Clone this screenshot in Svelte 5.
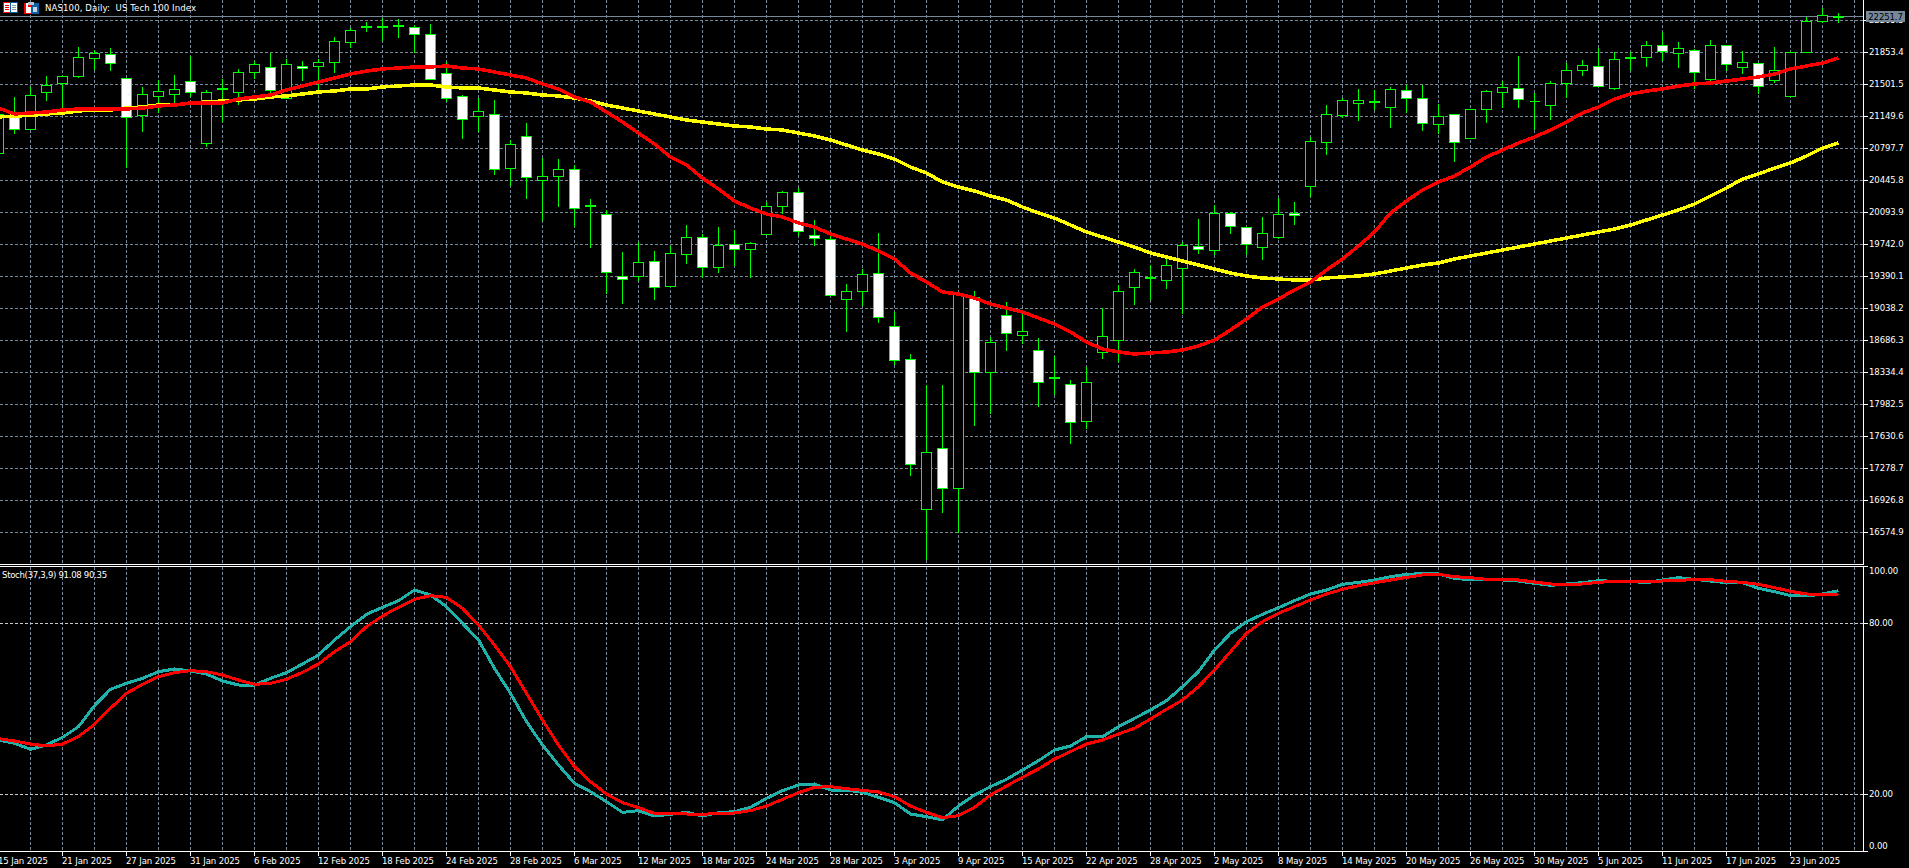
<script>
  // [high, bodyTop, bodyBottom, low, filled] in chart pixels, one per bar (16 px apart)
  const c = [
    [108,114,153,153,0],[97,117,129,133,1],[87,95,129,129,0],[76,85,92,100,0],[76,76,83,109,0],
    [47,57,76,77,0],[50,53,58,69,0],[48,54,63,70,1],[78,78,117,167,1],[87,94,115,131,0],
    [80,91,96,112,0],[75,89,94,106,0],[56,81,92,96,1],[90,92,143,146,0],[79,88,89,121,0],
    [69,72,92,104,0],[61,64,72,78,0],[53,67,90,92,1],[59,64,98,98,0],[61,66,68,80,1],
    [59,62,66,92,0],[37,41,62,72,0],[28,30,42,47,0],[22,26,27,31,0],[18,26,27,40,0],
    [19,25,26,37,0],[25,27,34,52,1],[24,34,79,79,1],[62,73,98,101,1],[95,96,119,138,1],
    [98,111,116,131,0],[100,114,169,174,1],[140,144,168,185,0],[123,136,177,198,1],[158,176,180,220,0],
    [159,169,176,206,0],[165,169,208,226,1],[199,205,206,247,0],[210,214,272,293,1],[252,276,279,303,1],
    [242,262,276,280,0],[251,261,287,299,1],[246,253,286,286,0],[225,237,254,263,0],[234,237,267,277,1],
    [227,245,267,272,0],[230,244,249,265,1],[242,243,249,277,0],[202,206,234,234,0],[191,192,206,213,0],
    [188,192,231,235,1],[220,235,238,245,1],[235,239,295,295,1],[284,291,299,331,0],[269,274,291,305,0],
    [233,273,317,322,1],[312,326,360,364,1],[354,359,464,475,1],[385,452,509,559,0],[385,448,488,512,1],
    [293,293,488,532,0],[291,297,372,425,1],[337,342,372,413,0],[302,315,333,350,1],[310,331,335,343,0],
    [338,350,382,406,1],[356,377,378,394,0],[380,384,422,443,1],[367,382,421,428,0],[308,336,352,358,0],
    [285,291,340,361,0],[269,272,287,304,0],[265,277,278,299,0],[259,265,280,288,0],[242,245,268,313,0],
    [219,246,249,253,1],[205,213,250,254,0],[212,213,226,233,1],[227,227,244,254,1],[217,233,247,259,0],
    [198,214,237,238,0],[202,213,215,224,1],[137,141,186,196,0],[105,114,142,154,0],[98,100,115,117,0],
    [89,100,103,120,0],[90,101,102,109,0],[87,89,107,127,0],[85,90,98,112,1],[85,98,123,130,1],
    [104,116,124,133,0],[114,114,142,161,1],[109,109,138,138,0],[90,91,109,122,0],[81,87,92,107,0],
    [56,88,99,107,1],[93,101,101,129,0],[81,83,105,119,0],[63,70,83,97,0],[60,65,70,75,0],
    [48,66,86,86,1],[52,59,88,89,0],[52,57,58,70,0],[41,45,57,66,0],[32,45,51,60,1],
    [42,48,53,67,0],[49,50,72,88,1],[40,45,79,82,0],[45,45,64,70,1],[51,62,67,73,0],
    [63,63,86,93,1],[47,70,80,82,0],[52,52,96,96,0],[17,21,52,52,0],[8,15,21,22,0],
    [13,16,17,22,0]
  ];
  const barX = (i) => -2 + 16 * i;
  const candles = c.map(([high, top, bot, low, filled], i) => {
    const x = barX(i);
    return {
      wick: `M${x + 0.5} ${high}V${low + 1}`,
      body: `M${x - 4.5} ${top + 0.5}h10V${bot + 0.5}h-10z`,
      filled
    };
  });

  const ma21 = [
    108,114,113,112,110,109,109,109,109,108,
    106,105,103,103,103,99,97,95,90,86,
    82,78,74,71,69,68,67,67,66,68,
    69,72,75,78,84,89,97,102,112,122,
    133,144,157,165,178,189,201,208,214,217,
    223,227,234,239,244,251,259,273,282,292,
    294,298,304,308,312,318,324,332,342,349,
    352,354,353,352,350,346,340,330,319,307,
    299,290,282,270,259,246,232,213,201,190,
    182,176,167,157,150,143,137,130,122,113,
    107,99,94,91,89,86,84,83,81,79,
    77,74,69,66,63,58
  ];
  const ma50 = [
    117,116,115.5,114,113,111,110,110,108,107,
    105,105,103,102,101,100,99,97,96,94,
    92,91,89,89,87,86,85,85,87,88,
    88,90,92,93,95,96,98,101,105,108,
    111,114,117,120,122,124,126,127,129,130,
    133,136,140,145,150,154,159,167,173,182,
    187,191,196,200,207,213,218,225,232,237,
    242,247,253,257,261,265,269,273,276,278,
    279,280,280,278,277,276,274,271,268,265,
    263,259,256,253,250,247,244,241,238,235,
    232,229,225,220,215,210,204,196,188,179,
    174,168,163,156,148,143
  ];

  // Stochastic, as read from the pane: left part, middle part, right part, tail
  const a = (v) => 540 + v / 3;
  const b = (v) => 570 + v / 3;
  const d = (v) => 520 + v / 3;
  const stochMain = [
    ...[600,610,628,615,592,560,497,448,430,415,395,387,393,402,423,435,435,415,398,372,345].map(a),
    ...[210,170,133,112,92,60,75,110,160,210,295,370,455,525,585,640,665,695,727,722,738,733,727,738,728,725,712,685,662,645,642,660,660,667,682,698,732,740,750,708].map(b),
    ...[675,650,628,600,572,540,528,500,500,470,445,420,392,350,305,240,190,155,133,113,92,72,60,43,37,30,20,13,11,12,25,29,28,30,33,40,46,42,38,32].map(b),
    ...[184,184,188,180,173,178,183,188,188,205,215,227,228,222,212].map(d)
  ];
  const stochSignal = [
    ...[596,603,612,618,612,590,553,505,460,433,410,398,392,395,405,420,433,430,418,397,372].map(a),
    ...[245,215,170,138,112,88,77,82,115,165,225,290,370,450,525,590,635,672,698,713,730,730,732,733,730,729,722,708,688,668,652,650,656,661,666,680,708,727,743,737].map(b),
    ...[712,675,648,622,597,567,545,522,510,492,475,447,418,390,350,300,245,190,155,130,110,90,72,58,47,38,30,22,15,13,20,23,28,29,30,36,42,43,42,37].map(b),
    ...[184,184,184,183,181,179,179,184,187,193,203,214,222,225,222].map(d)
  ];
  const points = (ys) => ys.map((y, i) => `${barX(i) + 0.5},${y}`).join(' ');

  const vGrid = Array.from({ length: 58 }, (_, i) => 30.5 + 32 * i);
  const hGrid = Array.from({ length: 17 }, (_, i) => 20.5 + 32 * i);

  const prices = ['22205.3','21853.4','21501.5','21149.6','20797.7','20445.8','20093.9','19742.0','19390.1','19038.2','18686.3','18334.4','17982.5','17630.6','17278.7','16926.8','16574.9'];
  const dates = ['15 Jan 2025','21 Jan 2025','27 Jan 2025','31 Jan 2025','6 Feb 2025','12 Feb 2025','18 Feb 2025','24 Feb 2025','28 Feb 2025','6 Mar 2025','12 Mar 2025','18 Mar 2025','24 Mar 2025','28 Mar 2025','3 Apr 2025','9 Apr 2025','15 Apr 2025','22 Apr 2025','28 Apr 2025','2 May 2025','8 May 2025','14 May 2025','20 May 2025','26 May 2025','30 May 2025','5 Jun 2025','11 Jun 2025','17 Jun 2025','23 Jun 2025'];
</script>

<div class="terminal">
  <section class="pane main">
    <svg class="plot" width="1863" height="564" viewBox="0 0 1863 564">
      {#each vGrid as x}<line class="grid" x1={x} x2={x} y1="0" y2="564" />{/each}
      {#each hGrid as y}<line class="grid" x1="0" x2="1863" y1={y} y2={y} />{/each}
      <line class="bid" x1="0" x2="1863" y1="16.5" y2="16.5" />
      {#each candles as k}
        <path class="wick" d={k.wick} />
        <path class="body" class:filled={k.filled} d={k.body} />
      {/each}
      <polyline class="line ma50" points={points(ma50)} />
      <polyline class="line ma21" points={points(ma21)} />
    </svg>
    <header class="title">
      <svg class="icon" width="16" height="12" viewBox="0 0 16 12">
        <rect x="0" y="0" width="15" height="11" fill="#fff" />
        <rect x="0.5" y="0.5" width="7" height="10" fill="#fff" stroke="#f00" />
        <rect x="7.5" y="0.5" width="7" height="10" fill="#fff" stroke="#0a5ea8" />
        <path d="M2 3.5h4M2 5.5h4M2 7.5h4" stroke="#f00" />
        <path d="M9 3.5h4M9 5.5h4M9 7.5h4" stroke="#8a9aa8" />
      </svg>
      <svg class="icon" width="16" height="12" viewBox="0 0 16 12">
        <rect x="0" y="1" width="8" height="11" fill="#f00" />
        <rect x="8" y="1" width="7" height="11" fill="#0a5ea8" />
        <rect x="2" y="1" width="2" height="6" fill="#fff" />
        <rect x="2" y="5" width="5" height="6" fill="#fff" />
        <rect x="4" y="0" width="6" height="3" fill="#b8c4ce" />
        <rect x="9" y="5" width="4" height="5" fill="#c8d4de" />
      </svg>
      <span class="title-text">NAS100, Daily:&nbsp; US Tech 100 Index</span>
    </header>
  </section>

  <aside class="scale">
    {#each prices as p}
      <div class="scale-row"><i class="tick"></i><span>{p}</span></div>
    {/each}
    <div class="bid-tag">22251.7</div>
  </aside>

  <section class="pane stoch">
    <svg class="plot" width="1863" height="284" viewBox="0 567 1863 284">
      {#each vGrid as x}<line class="grid" x1={x} x2={x} y1="567" y2="851" />{/each}
      <line class="level" x1="0" x2="1863" y1="623.5" y2="623.5" />
      <line class="level" x1="0" x2="1863" y1="794.5" y2="794.5" />
      <polyline class="line main-line" points={points(stochMain)} />
      <polyline class="line signal-line" points={points(stochSignal)} />
    </svg>
    <div class="stoch-label">Stoch(37,3,9) 91.08 90.35</div>
  </section>

  <aside class="scale stoch-scale">
    <div class="level-row top"><i class="tick"></i><span>100.00</span></div>
    <div class="level-row upper"><i class="tick"></i><span>80.00</span></div>
    <div class="level-row lower"><i class="tick"></i><span>20.00</span></div>
    <div class="level-row zero"><i class="tick"></i><span>0.00</span></div>
  </aside>

  <footer class="dates">
    {#each dates as t}
      <div class="date"><span>{t}</span></div>
    {/each}
  </footer>
</div>

<style>
  :global(body) {
    margin: 0;
    background: #000;
  }
  .terminal {
    width: 1909px;
    height: 868px;
    overflow: hidden;
    background: #000;
    color: #fff;
    font-family: "DejaVu Sans Condensed", "DejaVu Sans", sans-serif;
    font-stretch: condensed;
    font-size: 9.5px;
    letter-spacing: -0.12px;
    line-height: 12px;
    display: grid;
    grid-template-columns: 1863px 46px;
    grid-template-rows: 565px 287px 16px;
  }
  .pane {
    position: relative;
    min-width: 0;
  }
  .main {
    border-bottom: 1px solid #fff;
  }
  .stoch {
    margin-top: 1px;
    border-top: 1px solid #fff;
    border-bottom: 1px solid #fff;
  }
  .plot {
    display: block;
  }
  .grid {
    stroke: #778899;
    stroke-width: 1;
    stroke-dasharray: 3 2;
    shape-rendering: crispEdges;
  }
  .level {
    stroke: #c8ccd0;
    stroke-width: 1;
    stroke-dasharray: 3 2;
    shape-rendering: crispEdges;
  }
  .bid {
    stroke: #778899;
    stroke-width: 1;
    shape-rendering: crispEdges;
  }
  .wick {
    stroke: #00ff00;
    stroke-width: 1;
    fill: none;
    shape-rendering: crispEdges;
  }
  .body {
    stroke: #00ff00;
    stroke-width: 1;
    fill: #000;
    shape-rendering: crispEdges;
  }
  .body.filled {
    fill: #fff;
  }
  .line {
    fill: none;
    stroke-linejoin: round;
    shape-rendering: crispEdges;
  }
  .ma21 {
    stroke: #ff0000;
    stroke-width: 3.5;
  }
  .ma50 {
    stroke: #ffff00;
    stroke-width: 3.5;
  }
  .main-line {
    stroke: #20b2aa;
    stroke-width: 3;
  }
  .signal-line {
    stroke: #ff0000;
    stroke-width: 3;
  }
  .title {
    position: absolute;
    left: 3px;
    top: 2px;
    display: flex;
    align-items: center;
    gap: 5px;
    height: 12px;
  }
  .title-text {
    white-space: nowrap;
    letter-spacing: 0.12px;
  }
  .stoch-label {
    position: absolute;
    left: 2px;
    top: 2px;
    white-space: nowrap;
    letter-spacing: -0.3px;
  }
  .scale {
    position: relative;
    border-left: 1px solid #fff;
    height: 565px;
    padding-top: 12px;
    box-sizing: border-box;
  }
  .scale-row {
    height: 32px;
    display: flex;
    gap: 1px;
  }
  .scale-row span {
    line-height: 16px;
  }
  .tick {
    display: block;
    flex: none;
    width: 4px;
    height: 1px;
    margin-top: 8px;
    background: #fff;
  }
  .bid-tag {
    position: absolute;
    left: 2px;
    top: 11px;
    width: 39px;
    height: 11px;
    background: #778899;
    color: #000;
    line-height: 11px;
    text-align: center;
  }
  .stoch-scale {
    margin-top: 1px;
    height: 286px;
    padding-top: 0;
    overflow: visible;
  }
  .level-row {
    display: flex;
    gap: 1px;
  }
  .level-row .tick {
    margin-top: 0;
  }
  .level-row span {
    line-height: 12px;
  }
  .top {
    height: 57px;
  }
  .top span {
    margin-top: -1px;
  }
  .upper {
    height: 171px;
  }
  .upper span,
  .lower span {
    margin-top: -6px;
  }
  .lower {
    height: 57px;
  }
  .zero {
    height: 1px;
  }
  .zero span {
    margin-top: -11px;
  }
  .dates {
    display: flex;
    margin-left: -2px;
    width: 1865px;
    overflow: hidden;
  }
  .date {
    flex: 0 0 64px;
    box-sizing: border-box;
    height: 16px;
    position: relative;
    white-space: nowrap;
  }
  .date::before {
    content: "";
    position: absolute;
    left: 0;
    top: 0;
    width: 1px;
    height: 4px;
    background: #fff;
  }
  .date span {
    display: block;
    padding-top: 3px;
  }
</style>
